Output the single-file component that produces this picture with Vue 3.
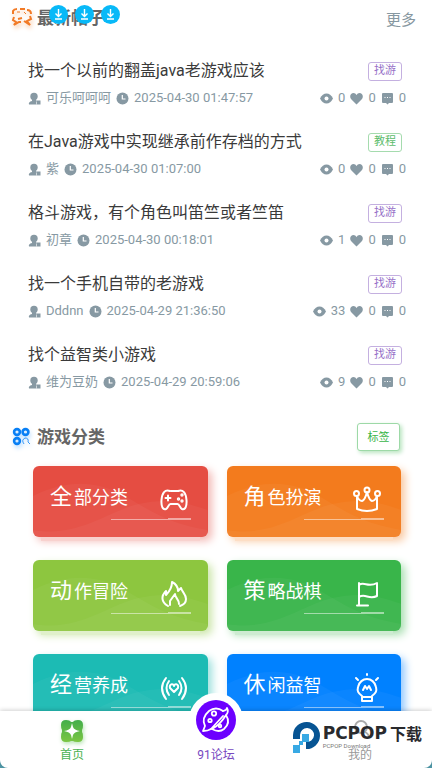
<script setup>
const posts = [
  { title: '找一个以前的翻盖java老游戏应该', tag: '找游', tone: 'purple', author: '可乐呵呵呵', time: '2025-04-30 01:47:57', views: 0 },
  { title: '在Java游戏中实现继承前作存档的方式', tag: '教程', tone: 'green', author: '紫', time: '2025-04-30 01:07:00', views: 0 },
  { title: '格斗游戏，有个角色叫笛竺或者竺笛', tag: '找游', tone: 'purple', author: '初章', time: '2025-04-30 00:18:01', views: 1 },
  { title: '找一个手机自带的老游戏', tag: '找游', tone: 'purple', author: 'Dddnn', time: '2025-04-29 21:36:50', views: 33 },
  { title: '找个益智类小游戏', tag: '找游', tone: 'purple', author: '维为豆奶', time: '2025-04-29 20:59:06', views: 9 }
]

const categories = [
  {
    first: '全', rest: '部分类', tone: 'red',
    paths: ['M10 5C5 3 2 7 1.500 14C1 21 3 24 6 23C8 22 8.500 18 10.500 18H17.500C19.500 18 20 22 22 23C25 24 27 21 26.500 14C26 7 23 3 18 5', 'M11 5H18', 'M5.500 12H10.500M8 9.500V14.500'],
    dots: [[22, 9], [18.5, 13], [22, 15]]
  },
  {
    first: '角', rest: '色扮演', tone: 'orange',
    paths: ['M4 10L4 23Q14 27 24 23L24 10Q22 15 19 15Q16 14 14 6Q12 14 9 15Q6 15 4 10'],
    rings: [[3.5, 7.5], [14, 4], [24.5, 7.5]]
  },
  {
    first: '动', rest: '作冒险', tone: 'lime',
    paths: ['M8 26C1 22 1 16 6 11V15C9 12 12 7 12 2C16 4 18 7 18 11L21 8C22 12 26 14 26 19C26 23 23 25 20 26', 'M10 25V21L15 14C15 18 19 19 19 24']
  },
  {
    first: '策', rest: '略战棋', tone: 'green',
    paths: ['M6 3V25M4 25.500H15', 'M6 5C11 1 15 8 24 3V16C16 20 12 13 6 17']
  },
  {
    first: '经', rest: '营养成', tone: 'teal',
    paths: ['M6 4Q-2 14 6 25M9 7Q4 14 9 21', 'M22 4Q30 14 22 25M19 7Q24 14 19 21', 'M14 18L10 14C9 10 13 9 14 12C15 9 19 10 18 14Z']
  },
  {
    first: '休', rest: '闲益智', tone: 'blue',
    paths: ['M9 27V22C5 19 4 17 5 13C6 8 10 5 14 5S22 8 23 13C24 17 23 19 19 22V27ZM10 23H18', 'M10 16L12 12L14 15L16 12L18 16', 'M14 0V1M3 4L5 6M25 4L23 6']
  }
]
</script>

<template>
  <div class="app">
    <main class="content">
      <header class="section-head latest">
        <svg class="head-icon orange-icon" viewBox="0 0 22 22" aria-hidden="true">
          <g fill="none" stroke="currentColor" stroke-width="2">
            <path d="M2 7V4Q3 2 6 2M9 2H14M16 3Q20 3 20 7M3 10L2 13L5 15L3 18L8 15H10" />
            <path d="M19 9L20 12L16 14L19 18L13 14M7 12L11 11" />
            <path d="M6 5H9M13 5L15 7" stroke-width="1" />
          </g>
        </svg>
        <h2>最新帖子</h2>
        <div class="downloads">
          <a v-for="n in 3" :key="n" href="#download" aria-label="下载">
            <svg viewBox="0 0 19 19" aria-hidden="true">
              <circle cx="9.500" cy="9.500" r="9.500" fill="#08b9f8" />
              <path d="M9.500 4V11M6.500 8.500L9.500 11.500L12.500 8.500M6 14H13" fill="none" stroke="#fff" stroke-width="1.400" />
            </svg>
          </a>
        </div>
        <a class="more" href="#more">更多</a>
      </header>

      <section class="posts">
        <article v-for="post in posts" :key="post.title" class="post">
          <div class="post-top">
            <h3><a href="#post">{{ post.title }}</a></h3>
            <span class="tag" :class="post.tone">{{ post.tag }}</span>
          </div>
          <div class="meta">
            <svg viewBox="0 0 13 13" aria-hidden="true">
              <circle cx="6" cy="4.500" r="3.700" />
              <path d="M4 6H8V8.500H12.500V12.500H1Q0 10 4 9Z" />
              <path d="M8.500 9.500V12.500" stroke="#fff" stroke-width=".6" />
            </svg>
            <span>{{ post.author }}</span>
            <svg viewBox="0 0 13 13" aria-hidden="true">
              <circle cx="6.500" cy="6.500" r="6" />
              <path d="M6.300 3V7H9.500" fill="none" stroke="#fff" stroke-width="1.200" />
            </svg>
            <time>{{ post.time }}</time>
            <div class="stats">
              <svg viewBox="0 0 13 13" aria-hidden="true">
                <path d="M0 6.500Q2.500 1.500 6.500 1.500T13 6.500Q10.500 11.500 6.500 11.500T0 6.500Z" />
                <circle cx="6.500" cy="6.500" r="2" fill="#fff" />
              </svg>
              <span>{{ post.views }}</span>
              <svg viewBox="0 0 13 13" aria-hidden="true">
                <path d="M6.500 12.500L1 7C-1 4 1 1 3.500 1Q5.500 1 6.500 3Q7.500 1 9.500 1C12 1 14 4 12 7Z" />
              </svg>
              <span>0</span>
              <svg viewBox="0 0 13 13" aria-hidden="true">
                <path d="M2 1H11Q12 1 12 2V10Q12 11 11 11H8L6.500 12.500L5 11H2Q1 11 1 10V2Q1 1 2 1Z" />
                <path d="M3.500 5.500H4.500M6 5.500H7M8.500 5.500H9.500" stroke="#fff" />
              </svg>
              <span>0</span>
            </div>
          </div>
        </article>
      </section>

      <header class="section-head category-head">
        <svg class="head-icon blue-icon" viewBox="0 0 22 22" aria-hidden="true">
          <g fill="none" stroke="currentColor" stroke-width="2.600">
            <circle cx="6" cy="6" r="2.900" />
            <circle cx="14.500" cy="6" r="2.900" />
            <circle cx="6" cy="15" r="2.900" />
            <path d="M13 18Q10 14 14 12Q18 12 17 16L19 18" stroke-width=".8" />
          </g>
        </svg>
        <h2>游戏分类</h2>
        <button class="label-button" type="button">标签</button>
      </header>

      <section class="categories">
        <a v-for="item in categories" :key="item.first" class="card" :class="item.tone" href="#category">
          <svg class="waves" viewBox="0 0 174 71" preserveAspectRatio="none" aria-hidden="true">
            <path d="M0 30C35 13 65 14 95 32S140 58 174 64V71H0Z" />
            <path d="M0 64C45 72 75 45 105 38S155 37 174 44V71H0Z" />
          </svg>
          <span class="name"><b>{{ item.first }}</b>{{ item.rest }}</span>
          <svg class="glyph" viewBox="0 0 28 28" aria-hidden="true">
            <path v-for="path in item.paths" :key="path" :d="path" />
            <circle v-for="ring in item.rings" :key="ring[0]" :cx="ring[0]" :cy="ring[1]" r="2.500" />
            <circle v-for="dot in item.dots" :key="dot[1]" :cx="dot[0]" :cy="dot[1]" r=".7" />
          </svg>
          <span class="rule"></span>
        </a>
      </section>
    </main>

    <div class="nav-base">
      <nav>
        <a class="nav-item home" href="#home">
          <svg viewBox="0 0 24 24" aria-hidden="true">
            <defs>
              <linearGradient id="leaf" x2="0" y2="1">
                <stop stop-color="#43ae4b" />
                <stop offset="1" stop-color="#7bc643" />
              </linearGradient>
            </defs>
            <path fill="url(#leaf)" d="M6 1Q10 1 11 3H13Q14 1 18 1Q23 1 23 6Q23 10 22 11V13Q23 14 23 18Q23 23 18 23Q14 23 13 22H11Q10 23 6 23Q1 23 1 18Q1 14 2 13V11Q1 10 1 6Q1 1 6 1Z" />
            <path fill="#fff" d="M12 4Q12.500 6 13 8Q14 11 20 12Q14 13 13 16Q12.500 18 12 20Q11.500 18 11 16Q10 13 4 12Q10 11 11 8Q11.500 6 12 4Z" />
          </svg>
          <span>首页</span>
        </a>
        <a class="nav-item forum" href="#forum">
          <span class="orb">
            <svg viewBox="0 0 40 40" aria-hidden="true">
              <g fill="none" stroke="#fff" stroke-width="1.800" stroke-linecap="round" stroke-linejoin="round">
                <path d="M27 11Q20 6 13 11Q5 18 9 26L7 31Q12 31 15 29" />
                <path d="M27 11Q31 10 31 8Q33 12 30 15Q35 23 28 29Q23 33 16 29Q24 25 30 15M15 29L27 16" />
                <circle cx="18" cy="13.500" r="2.200" />
                <circle cx="14" cy="20.500" r="1.700" />
                <circle cx="24" cy="26" r="1.300" />
              </g>
            </svg>
          </span>
          <span>91论坛</span>
        </a>
        <a class="nav-item mine" href="#mine">
          <svg viewBox="0 0 24 24" aria-hidden="true">
            <circle cx="13" cy="8" r="6" fill="none" stroke="#aaa" stroke-width="1.800" />
            <path d="M17 13Q21 15 21 19" fill="none" stroke="#aaa" stroke-width="1.800" />
          </svg>
          <span>我的</span>
        </a>
      </nav>
    </div>

    <div class="brand">
      <svg viewBox="0 0 28 32" aria-hidden="true">
        <path d="M1 18V14A13.500 13.500 0 1 1 14 28V21A7 7 0 1 0 8 14V18Z" fill="#075493" />
        <path d="M10 13H17V21H10ZM1 24H8V32H1ZM7 20H11V24H7Z" fill="#38a9e4" />
      </svg>
      <div>
        <strong>PCPOP<em>下载</em></strong>
        <small>PCPOP Download</small>
      </div>
    </div>
  </div>
</template>

<style>
body {
  margin: 0;
  background: #fff;
}
</style>

<style scoped>
.app {
  position: relative;
  display: flex;
  flex-direction: column;
  height: 100vh;
  overflow: hidden;
  color: #3a3a3a;
  font-family: Roboto, "Noto Sans CJK SC", sans-serif;
}
a {
  color: inherit;
  text-decoration: none;
}
h2, h3 {
  margin: 0;
}
svg {
  flex: none;
}
.content {
  flex: 1;
  min-height: 0;
  overflow: hidden;
}
.section-head {
  position: relative;
  display: flex;
  align-items: center;
  gap: 4px;
  padding: 0 16px 0 11px;
}
.latest {
  height: 36px;
}
.section-head h2 {
  color: #666;
  font-size: 17px;
  line-height: 24px;
}
.head-icon {
  width: 22px;
  height: 22px;
}
.orange-icon {
  color: #f27b27;
  filter: drop-shadow(1px 3px 2px #f9cdaa);
}
.blue-icon {
  color: #087ff5;
  filter: drop-shadow(1px 3px 2px #b7dcff);
}
.downloads {
  position: absolute;
  top: 5px;
  left: 49px;
  display: flex;
  gap: 7px;
}
.downloads a, .downloads svg {
  display: block;
  width: 19px;
  height: 19px;
}
.more {
  margin-left: auto;
  color: #8798a1;
  font-size: 15px;
}
.posts {
  padding: 23px 26px 0 28px;
}
.post {
  height: 71px;
}
.post-top {
  display: flex;
  align-items: center;
  justify-content: space-between;
  height: 24px;
  padding-right: 4px;
}
h3 {
  font-size: 16px;
  font-weight: 400;
  line-height: 24px;
  white-space: nowrap;
}
.tag {
  box-sizing: border-box;
  width: 34px;
  height: 19px;
  border: 1px solid;
  border-radius: 3px;
  font-size: 11px;
  line-height: 16px;
  text-align: center;
}
.tag.purple {
  border-color: #c4b0e0;
  color: #9670c8;
}
.tag.green {
  border-color: #a5dbae;
  color: #5dbc6c;
}
.meta, .stats {
  display: flex;
  align-items: center;
  gap: 5px;
}
.meta {
  height: 20px;
  margin-top: 5px;
  color: #8799a3;
  font-size: 13px;
  line-height: 18px;
  white-space: nowrap;
}
.meta svg {
  width: 13px;
  height: 13px;
  fill: currentColor;
}
.stats {
  margin-left: auto;
}
.category-head {
  height: 46px;
  padding-right: 32px;
}
.label-button {
  width: 43px;
  height: 28px;
  margin-left: auto;
  padding: 0 0 2px;
  border: 1px solid #9dd9a7;
  border-radius: 3px;
  background: #fff;
  box-shadow: 2px 2px 4px #b9e5c0;
  color: #39b54a;
  font-family: inherit;
  font-size: 11px;
}
.categories {
  display: grid;
  grid-template-columns: 1fr 1fr;
  gap: 23px 19px;
  padding: 6px 31px 23px 33px;
}
.card {
  position: relative;
  display: flex;
  align-items: center;
  justify-content: space-between;
  box-sizing: border-box;
  height: 71px;
  padding: 0 20px 8px 17px;
  border-radius: 6px;
  color: #fff;
}
.red { background: #e54d42; box-shadow: 0 12px 0 -8px #f8d1ce, 4px 4px 8px #f3b9b5; }
.orange { background: #f37b1d; box-shadow: 0 12px 0 -8px #fddec5, 4px 4px 8px #f9c8a0; }
.lime { background: #8dc63f; box-shadow: 0 12px 0 -8px #e0f0cb, 4px 4px 8px #cce6aa; }
.card.green { background: #39b54a; box-shadow: 0 12px 0 -8px #cdebd1, 4px 4px 8px #a9dfb1; }
.teal { background: #1cbbb4; box-shadow: 4px 4px 8px #9ce0dd; }
.blue { background: #0081ff; box-shadow: 4px 4px 8px #91c8ff; }
.waves {
  position: absolute;
  inset: 0;
  width: 100%;
  height: 100%;
  border-radius: 6px;
}
.waves path {
  fill: #fff;
  fill-opacity: .04;
}
.name {
  position: relative;
  font-size: 18px;
  line-height: 32px;
  white-space: nowrap;
}
.name b {
  margin-right: 2px;
  font-size: 22px;
  font-weight: 400;
}
.glyph {
  position: relative;
  width: 28px;
  height: 28px;
  margin-top: 5px;
  overflow: visible;
  fill: none;
  stroke: #fff;
  stroke-width: 2;
  stroke-linecap: round;
  stroke-linejoin: round;
}
.rule {
  position: absolute;
  right: 17px;
  bottom: 17px;
  width: 80px;
  height: 2px;
  background:
    linear-gradient(#fff, #fff) right / 23px 2px no-repeat,
    linear-gradient(#fff, #fff) bottom / 100% 1px no-repeat;
  opacity: .5;
}
.nav-base {
  position: relative;
  background: #4f98a8;
}
nav {
  display: grid;
  grid-template-columns: repeat(3, 1fr);
  height: 57px;
  border-radius: 0 0 8px 8px;
  background: #fff;
  box-shadow: 0 -1px 4px rgba(0, 0, 0, .18);
}
.nav-item {
  display: flex;
  flex-direction: column;
  align-items: center;
  gap: 3px;
  padding-top: 8px;
  font-size: 12px;
  line-height: 18px;
}
.nav-item > svg {
  width: 24px;
  height: 24px;
}
.home {
  color: #4ab151;
}
.home svg {
  filter: drop-shadow(1px 2px 2px #b9e5b6);
}
.forum {
  margin-top: -18px;
  padding-top: 0;
  gap: 0;
  color: #7748bf;
}
.orb {
  display: grid;
  place-items: center;
  width: 54px;
  height: 53px;
  border-radius: 27px 27px 0 0;
  background: #fff;
}
.orb svg {
  width: 40px;
  height: 40px;
  border-radius: 50%;
  background: #6c00ff;
}
.mine {
  color: #999;
}
.brand {
  position: absolute;
  right: 10px;
  bottom: 15px;
  display: flex;
  align-items: center;
  gap: 3px;
  color: #292a2d;
}
.brand > svg {
  width: 28px;
  height: 32px;
}
.brand strong {
  display: flex;
  align-items: center;
  font-family: "DejaVu Sans", sans-serif;
  font-size: 17px;
  line-height: 18px;
}
.brand em {
  margin-left: 3px;
  font-family: "Noto Sans CJK SC", sans-serif;
  font-size: 16px;
  font-style: normal;
}
.brand small {
  display: block;
  color: #777;
  font-size: 6px;
  line-height: 8px;
}
</style>
